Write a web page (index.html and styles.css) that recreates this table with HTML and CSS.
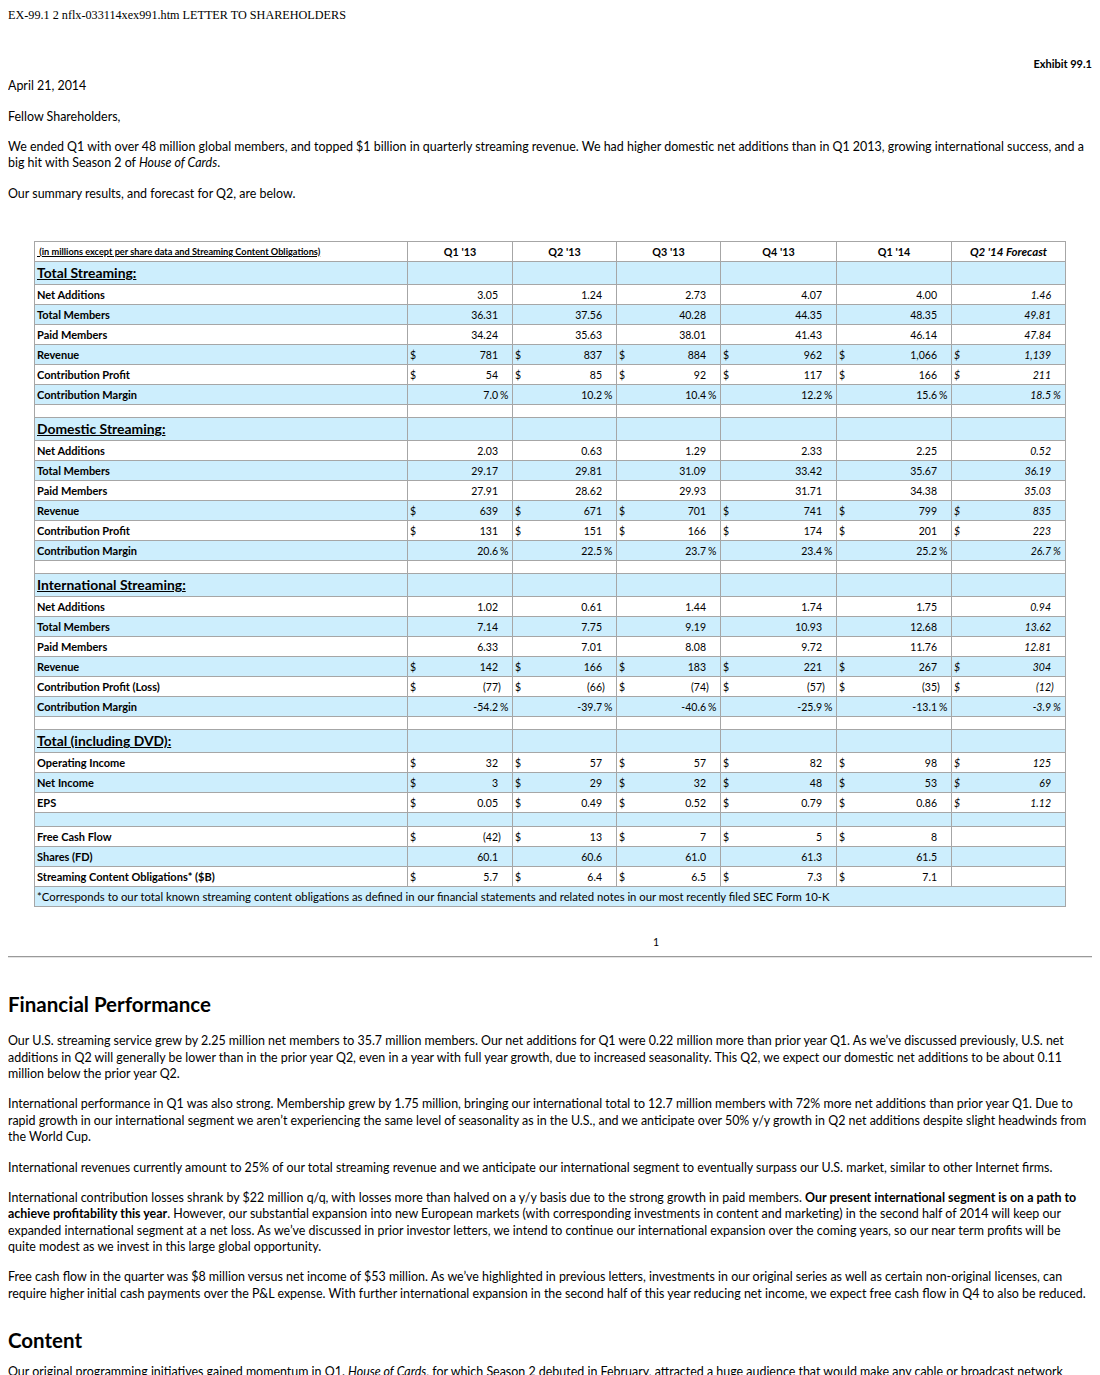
FILE: index.html
```html
<!DOCTYPE html>
<html lang="en">
<head>
<meta charset="utf-8">
<title>Netflix Letter to Shareholders</title>
<link rel="stylesheet" href="styles.css">
</head>
<body>
<div class="doc-title">EX-99.1 2 nflx-033114xex991.htm LETTER TO SHAREHOLDERS</div>
<main class="letter">
  <p class="exhibit">Exhibit 99.1</p>
  <p class="date">April 21, 2014</p>
  <p class="greet">Fellow Shareholders,</p>
  <p>We ended Q1 with over 48 million global members, and topped $1 billion in quarterly streaming revenue. We had higher domestic net additions than in Q1 2013, growing international success, and a<br>big hit with Season 2 of <i>House of Cards</i>.</p>
  <p>Our summary results, and forecast for Q2, are below.</p>

  <div class="summary">
    <table class="fin">
      <colgroup>
        <col class="c-lbl"><col class="c-a"><col class="c-b"><col class="c-b"><col class="c-c"><col class="c-d"><col class="c-e">
      </colgroup>
      <thead>
        <tr class="hdr">
          <th class="unit"><u>&nbsp;(in millions except per share data and Streaming Content Obligations)</u></th>
          <th>Q1 '13</th><th>Q2 '13</th><th>Q3 '13</th><th>Q4 '13</th><th>Q1 '14</th><th class="f">Q2 '14 Forecast</th>
        </tr>
      </thead>
      <tbody>
        <tr class="sec b"><th><u>Total Streaming:</u></th><td></td><td></td><td></td><td></td><td></td><td></td></tr>
        <tr><th>Net Additions</th><td>3.05</td><td>1.24</td><td>2.73</td><td>4.07</td><td>4.00</td><td class="f">1.46</td></tr>
        <tr class="b"><th>Total Members</th><td>36.31</td><td>37.56</td><td>40.28</td><td>44.35</td><td>48.35</td><td class="f">49.81</td></tr>
        <tr><th>Paid Members</th><td>34.24</td><td>35.63</td><td>38.01</td><td>41.43</td><td>46.14</td><td class="f">47.84</td></tr>
        <tr class="b"><th>Revenue</th><td><span class="cur">$</span>781</td><td><span class="cur">$</span>837</td><td><span class="cur">$</span>884</td><td><span class="cur">$</span>962</td><td><span class="cur">$</span>1,066</td><td class="f"><span class="cur">$</span>1,139</td></tr>
        <tr><th>Contribution Profit</th><td><span class="cur">$</span>54</td><td><span class="cur">$</span>85</td><td><span class="cur">$</span>92</td><td><span class="cur">$</span>117</td><td><span class="cur">$</span>166</td><td class="f"><span class="cur">$</span>211</td></tr>
        <tr class="b"><th>Contribution Margin</th><td>7.0<span class="sx pc">%</span></td><td>10.2<span class="sx pc">%</span></td><td>10.4<span class="sx pc">%</span></td><td>12.2<span class="sx pc">%</span></td><td>15.6<span class="sx pc">%</span></td><td class="f">18.5<span class="sx pc">%</span></td></tr>
        <tr class="gap"><th></th><td></td><td></td><td></td><td></td><td></td><td></td></tr>

        <tr class="sec b"><th><u>Domestic Streaming:</u></th><td></td><td></td><td></td><td></td><td></td><td></td></tr>
        <tr><th>Net Additions</th><td>2.03</td><td>0.63</td><td>1.29</td><td>2.33</td><td>2.25</td><td class="f">0.52</td></tr>
        <tr class="b"><th>Total Members</th><td>29.17</td><td>29.81</td><td>31.09</td><td>33.42</td><td>35.67</td><td class="f">36.19</td></tr>
        <tr><th>Paid Members</th><td>27.91</td><td>28.62</td><td>29.93</td><td>31.71</td><td>34.38</td><td class="f">35.03</td></tr>
        <tr class="b"><th>Revenue</th><td><span class="cur">$</span>639</td><td><span class="cur">$</span>671</td><td><span class="cur">$</span>701</td><td><span class="cur">$</span>741</td><td><span class="cur">$</span>799</td><td class="f"><span class="cur">$</span>835</td></tr>
        <tr><th>Contribution Profit</th><td><span class="cur">$</span>131</td><td><span class="cur">$</span>151</td><td><span class="cur">$</span>166</td><td><span class="cur">$</span>174</td><td><span class="cur">$</span>201</td><td class="f"><span class="cur">$</span>223</td></tr>
        <tr class="b"><th>Contribution Margin</th><td>20.6<span class="sx pc">%</span></td><td>22.5<span class="sx pc">%</span></td><td>23.7<span class="sx pc">%</span></td><td>23.4<span class="sx pc">%</span></td><td>25.2<span class="sx pc">%</span></td><td class="f">26.7<span class="sx pc">%</span></td></tr>
        <tr class="gap"><th></th><td></td><td></td><td></td><td></td><td></td><td></td></tr>

        <tr class="sec b"><th><u>International Streaming:</u></th><td></td><td></td><td></td><td></td><td></td><td></td></tr>
        <tr><th>Net Additions</th><td>1.02</td><td>0.61</td><td>1.44</td><td>1.74</td><td>1.75</td><td class="f">0.94</td></tr>
        <tr class="b"><th>Total Members</th><td>7.14</td><td>7.75</td><td>9.19</td><td>10.93</td><td>12.68</td><td class="f">13.62</td></tr>
        <tr><th>Paid Members</th><td>6.33</td><td>7.01</td><td>8.08</td><td>9.72</td><td>11.76</td><td class="f">12.81</td></tr>
        <tr class="b"><th>Revenue</th><td><span class="cur">$</span>142</td><td><span class="cur">$</span>166</td><td><span class="cur">$</span>183</td><td><span class="cur">$</span>221</td><td><span class="cur">$</span>267</td><td class="f"><span class="cur">$</span>304</td></tr>
        <tr><th>Contribution Profit (Loss)</th><td><span class="cur">$</span>(77<span class="sx">)</span></td><td><span class="cur">$</span>(66<span class="sx">)</span></td><td><span class="cur">$</span>(74<span class="sx">)</span></td><td><span class="cur">$</span>(57<span class="sx">)</span></td><td><span class="cur">$</span>(35<span class="sx">)</span></td><td class="f"><span class="cur">$</span>(12<span class="sx">)</span></td></tr>
        <tr class="b"><th>Contribution Margin</th><td>-54.2<span class="sx pc">%</span></td><td>-39.7<span class="sx pc">%</span></td><td>-40.6<span class="sx pc">%</span></td><td>-25.9<span class="sx pc">%</span></td><td>-13.1<span class="sx pc">%</span></td><td class="f">-3.9<span class="sx pc">%</span></td></tr>
        <tr class="gap"><th></th><td></td><td></td><td></td><td></td><td></td><td></td></tr>

        <tr class="sec b"><th><u>Total (including DVD):</u></th><td></td><td></td><td></td><td></td><td></td><td></td></tr>
        <tr><th>Operating Income</th><td><span class="cur">$</span>32</td><td><span class="cur">$</span>57</td><td><span class="cur">$</span>57</td><td><span class="cur">$</span>82</td><td><span class="cur">$</span>98</td><td class="f"><span class="cur">$</span>125</td></tr>
        <tr class="b"><th>Net Income</th><td><span class="cur">$</span>3</td><td><span class="cur">$</span>29</td><td><span class="cur">$</span>32</td><td><span class="cur">$</span>48</td><td><span class="cur">$</span>53</td><td class="f"><span class="cur">$</span>69</td></tr>
        <tr><th>EPS</th><td><span class="cur">$</span>0.05</td><td><span class="cur">$</span>0.49</td><td><span class="cur">$</span>0.52</td><td><span class="cur">$</span>0.79</td><td><span class="cur">$</span>0.86</td><td class="f"><span class="cur">$</span>1.12</td></tr>
        <tr class="gap wide b"><th></th><td></td><td></td><td></td><td></td><td></td><td></td></tr>
        <tr><th>Free Cash Flow</th><td><span class="cur">$</span>(42<span class="sx">)</span></td><td><span class="cur">$</span>13</td><td><span class="cur">$</span>7</td><td><span class="cur">$</span>5</td><td><span class="cur">$</span>8</td><td class="f"></td></tr>
        <tr class="b"><th>Shares (FD)</th><td>60.1</td><td>60.6</td><td>61.0</td><td>61.3</td><td>61.5</td><td class="f"></td></tr>
        <tr><th>Streaming Content Obligations* ($B)</th><td><span class="cur">$</span>5.7</td><td><span class="cur">$</span>6.4</td><td><span class="cur">$</span>6.5</td><td><span class="cur">$</span>7.3</td><td><span class="cur">$</span>7.1</td><td class="f"></td></tr>
        <tr class="note b"><td colspan="7">*Corresponds to our total known streaming content obligations as defined in our financial statements and related notes in our most recently filed SEC Form 10-K</td></tr>
      </tbody>
    </table>
  </div>

  <div class="page-num">1</div>
  <hr class="page-break">

  <h2>Financial Performance</h2>
  <p>Our U.S. streaming service grew by 2.25 million net members to 35.7 million members. Our net additions for Q1 were 0.22 million more than prior year Q1. As we’ve discussed previously, U.S. net<br>additions in Q2 will generally be lower than in the prior year Q2, even in a year with full year growth, due to increased seasonality. This Q2, we expect our domestic net additions to be about 0.11<br>million below the prior year Q2.</p>
  <p>International performance in Q1 was also strong. Membership grew by 1.75 million, bringing our international total to 12.7 million members with 72% more net additions than prior year Q1. Due to<br>rapid growth in our international segment we aren’t experiencing the same level of seasonality as in the U.S., and we anticipate over 50% y/y growth in Q2 net additions despite slight headwinds from<br>the World Cup.</p>
  <p>International revenues currently amount to 25% of our total streaming revenue and we anticipate our international segment to eventually surpass our U.S. market, similar to other Internet firms.</p>
  <p>International contribution losses shrank by $22 million q/q, with losses more than halved on a y/y basis due to the strong growth in paid members. <b>Our present international segment is on a path to<br>achieve profitability this year</b>. However, our substantial expansion into new European markets (with corresponding investments in content and marketing) in the second half of 2014 will keep our<br>expanded international segment at a net loss. As we’ve discussed in prior investor letters, we intend to continue our international expansion over the coming years, so our near term profits will be<br>quite modest as we invest in this large global opportunity.</p>
  <p>Free cash flow in the quarter was $8 million versus net income of $53 million. As we’ve highlighted in previous letters, investments in our original series as well as certain non-original licenses, can<br>require higher initial cash payments over the P&amp;L expense. With further international expansion in the second half of this year reducing net income, we expect free cash flow in Q4 to also be reduced.</p>

  <h2 class="second">Content</h2>
  <p>Our original programming initiatives gained momentum in Q1. <i>House of Cards</i>, for which Season 2 debuted in February, attracted a huge audience that would make any cable or broadcast network<br>proud.</p>
</main>
</body>
</html>
```

FILE: styles.css
```css
html, body {
  background: #ffffff;
}

body {
  margin: 8px;
  color: #000000;
  font-family: Lato, "Open Sans", sans-serif;
}

.doc-title {
  font-family: "Liberation Serif", "Times New Roman", serif;
  font-size: 12.2px;
  line-height: 14px;
  white-space: nowrap;
}

.letter {
  font-size: 12.45px;
  line-height: 16.3px;
}

.letter p {
  margin: 0 0 14.2px 0;
}

.letter .exhibit {
  margin: 34px 0 6px 0;
  text-align: right;
  font-weight: bold;
  font-size: 11px;
  line-height: 16px;
}

.letter .date {
  margin-bottom: 15px;
}

.letter .greet {
  margin-bottom: 13.2px;
}

/* ---------- summary table ---------- */
.summary {
  margin: 39.5px 0 0 26px;
}

.fin {
  border-collapse: collapse;
  table-layout: fixed;
  width: 1031px;
  font-size: 10.5px;
  line-height: 12px;
}

.c-lbl { width: 373px; }
.c-a { width: 105px; }
.c-b { width: 104px; }
.c-c { width: 116px; }
.c-d { width: 115px; }
.c-e { width: 114px; }

.fin th,
.fin td {
  border: 1px solid #a6a6a6;
  padding: 0 14px 0 2px;
  text-align: right;
  font-weight: normal;
  white-space: nowrap;
  vertical-align: middle;
}

.fin tbody th {
  text-align: left;
  font-weight: bold;
  font-size: 11px;
  padding: 0 2px;
}

.fin tr { height: 20px; }
.fin tr.hdr { height: 20px; }
.fin tr.sec { height: 23px; }
.fin tr.gap { height: 13px; }
.fin tr.gap.wide { height: 14px; }

.fin thead th {
  text-align: center;
  font-weight: bold;
  font-size: 10.8px;
  padding: 0 2px;
}

.fin thead th.f {
  font-size: 11.5px;
}

.fin thead th.unit {
  text-align: left;
  font-size: 9.2px;
}

.fin tr.sec th {
  font-size: 13.9px;
}

.fin tr.b th,
.fin tr.b td {
  background: #cdeefd;
}

.fin .f {
  font-style: italic;
}

.cur {
  float: left;
}

.sx {
  display: inline-block;
  width: 12px;
  margin-right: -12px;
  text-align: left;
}

.sx.pc {
  width: 10px;
  padding-left: 2px;
}

.fin tr.note td {
  text-align: left;
  padding: 0 2px;
  font-size: 11.3px;
}

/* ---------- body copy ---------- */
.page-num {
  margin: 27px 0 0 0;
  padding-left: 212px;
  text-align: center;
  font-size: 10.5px;
  line-height: 16px;
}

.page-break {
  margin: 6px 0 0 0;
  border: 0;
  border-top: 1px solid #9a9a9a;
  border-bottom: 1px solid #e4e4e4;
  height: 0;
}

.letter h2 {
  margin: 34px 0 17px 0;
  font-size: 20.5px;
  line-height: 24px;
  font-weight: bold;
}

.letter h2.second {
  margin-top: 26px;
  margin-bottom: 12px;
}
```
